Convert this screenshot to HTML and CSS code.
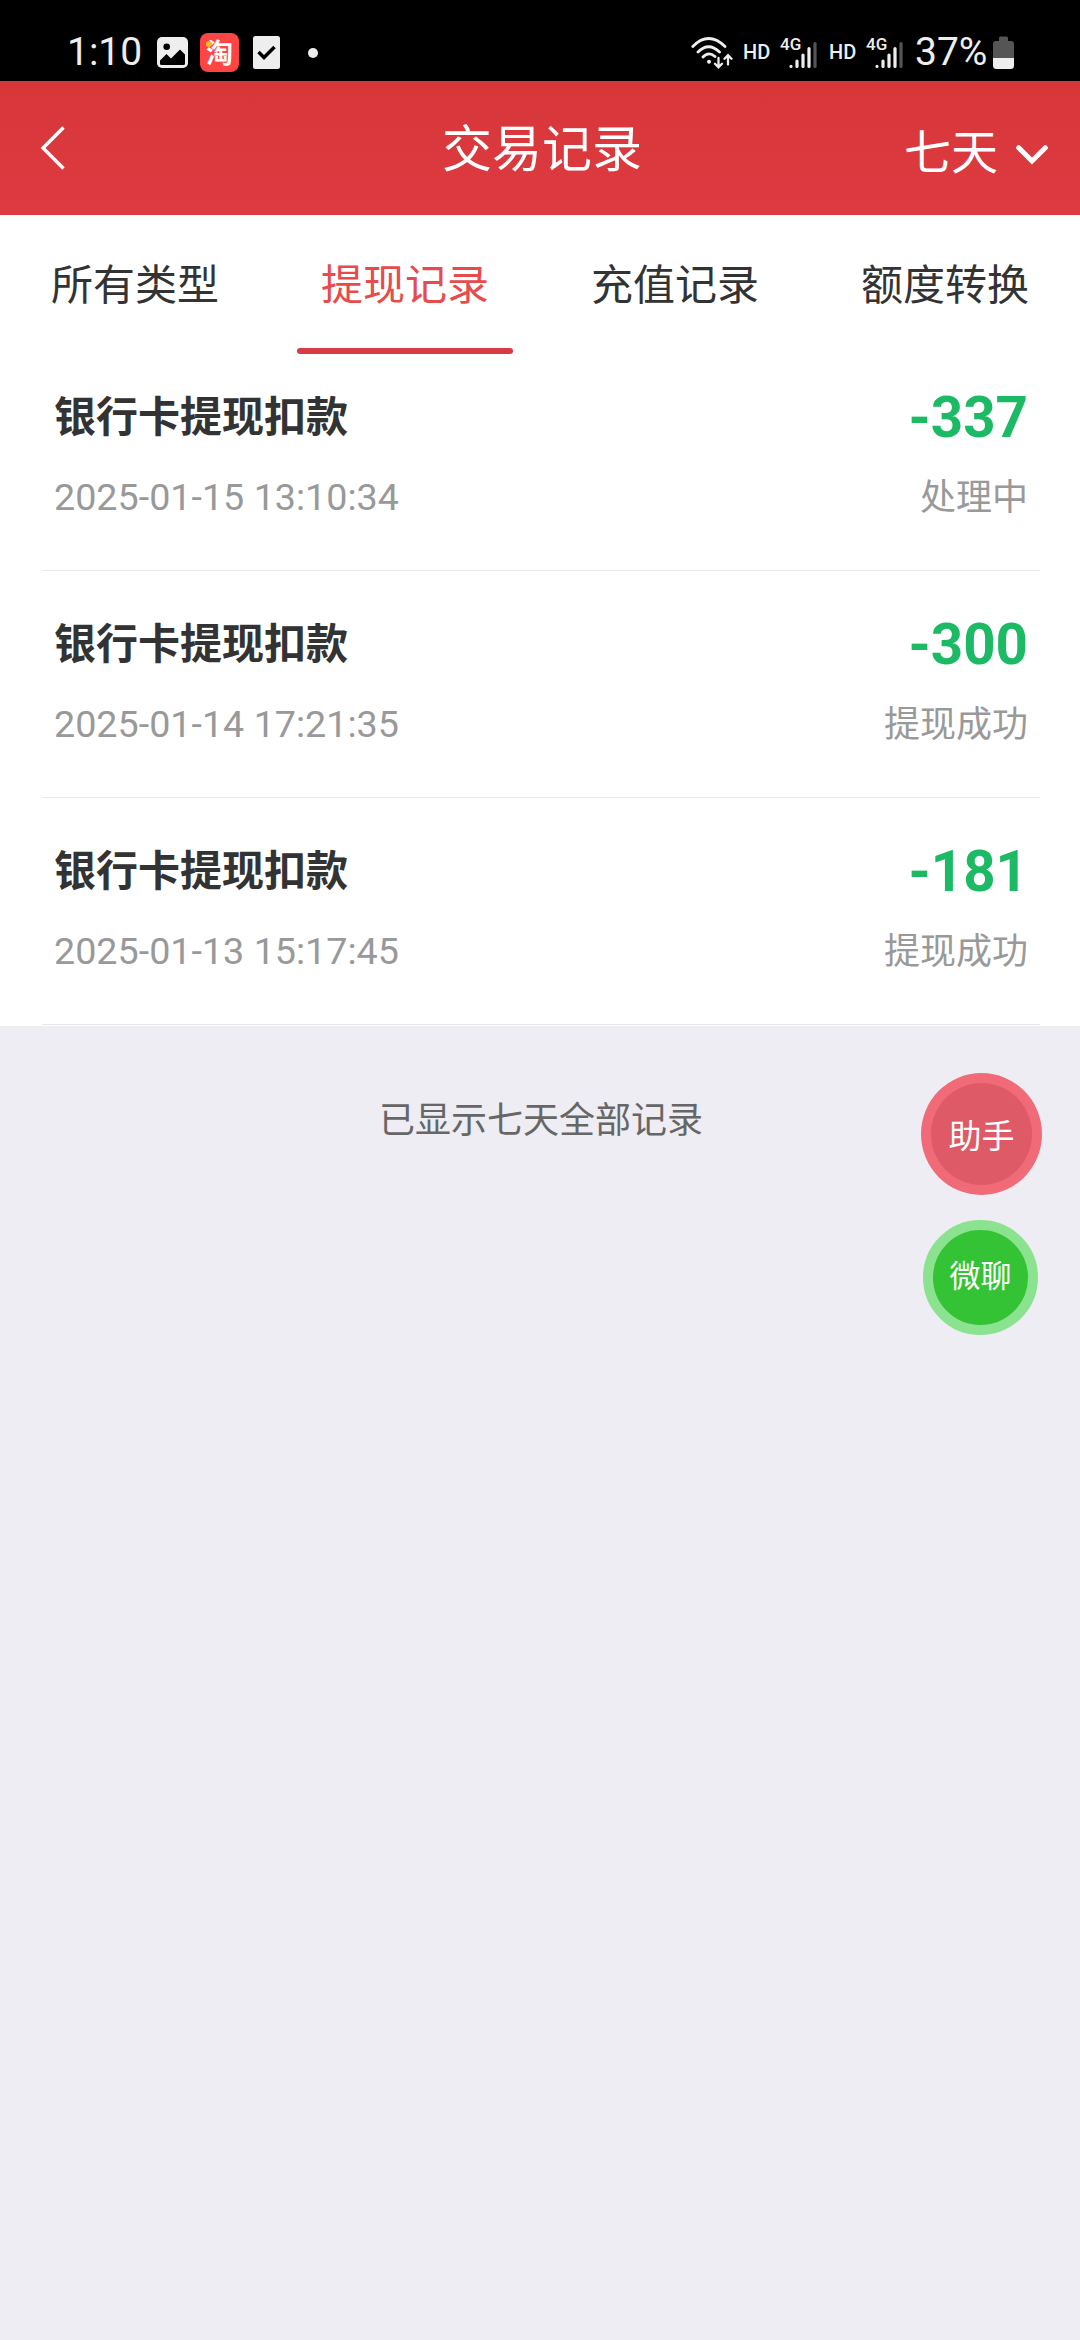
FILE: index.html
```html
<!DOCTYPE html>
<html lang="zh-CN">
<head>
<meta charset="utf-8">
<title>交易记录</title>
<link rel="stylesheet" href="styles.css">
</head>
<body>
<div class="status-bar">
  <div class="status-left">
    <span class="clock">1:10</span>
    <svg class="icon-photo" width="31" height="31" viewBox="0 0 31 31"><rect width="31" height="31" rx="5" fill="#eee"/><circle cx="9.7" cy="9.7" r="3.3" fill="#000"/><path d="M3 23.500L9.500 17L14 21.500L23 12.500L28 17.500V26.500Q28 28 26.500 28H4.500Q3 28 3 26.500Z" fill="#000"/></svg>
    <span class="icon-tao">淘</span>
    <svg class="icon-task" width="27" height="33" viewBox="0 0 27 33"><rect width="27" height="33" rx="2.500" fill="#eee"/><path d="M5.500 16L11 21.500L21.500 11" fill="none" stroke="#000" stroke-width="3.500"/></svg>
    <span class="dot"></span>
  </div>
  <div class="status-right">
    <svg class="icon-wifi" width="42" height="32" viewBox="0 0 42 32" fill="none" stroke="#eee" stroke-width="2.800" stroke-linecap="round"><path d="M1.800 9.500Q17.500 -6.300 34 9.500M7 15Q17.500 4.500 28.500 15M12 20Q17.500 14 24 19.500"/><circle cx="18" cy="24.700" r="2" fill="#eee" stroke="none"/><path d="M27.500 21V30M24 26.800L27.500 30.300L31 26.800M37 27.500V18.500M33.500 21.700L37 18.200L40.500 21.700" stroke-width="2.300"/></svg>
    <span class="hd">HD</span>
    <div class="signal"><span class="net">4G</span><svg class="bars" width="28" height="28" viewBox="0 0 28 28" stroke="#eee" stroke-width="3.200" stroke-linecap="round"><path d="M2 25.500V25.400M8 25.500V20M14 25.500V14M20 25.500V7.500"/><path d="M26 25.500V2.500" stroke="#555"/></svg></div>
    <span class="hd hd-second">HD</span>
    <div class="signal"><span class="net">4G</span><svg class="bars" width="28" height="28" viewBox="0 0 28 28" stroke="#eee" stroke-width="3.200" stroke-linecap="round"><path d="M2 25.500V25.400M8 25.500V20M14 25.500V14M20 25.500V7.500"/><path d="M26 25.500V2.500" stroke="#555"/></svg></div>
    <span class="percent">37%</span>
    <svg class="icon-battery" width="21" height="33" viewBox="0 0 21 33"><path d="M6 2Q6 .5 7.500 .5H13.500Q15 .5 15 2V5H18Q21 5 21 8V22H0V8Q0 5 3 5H6Z" fill="#555"/><path d="M0 22H21V29.500Q21 33 17.500 33H3.500Q0 33 0 29.500Z" fill="#eee"/></svg>
  </div>
</div>
<header class="header">
  <svg class="back" width="26" height="44" viewBox="0 0 26 44"><path d="M23.500 1.500L3 22L23.500 42.500" fill="none" stroke="#fff" stroke-width="3.400"/></svg>
  <h1 class="title">交易记录</h1>
  <div class="range"><span>七天</span><svg class="chevron" width="32" height="20" viewBox="0 0 32 20"><path d="M2.700 2.700L16 16L29.300 2.700" fill="none" stroke="#fff" stroke-width="5" stroke-linecap="round"/></svg></div>
</header>
<nav class="tabs">
  <div class="tab">所有类型</div>
  <div class="tab active">提现记录</div>
  <div class="tab">充值记录</div>
  <div class="tab">额度转换</div>
</nav>
<main class="records">
  <div class="record">
    <div class="info"><div class="name">银行卡提现扣款</div><div class="time">2025-01-15 13:10:34</div></div>
    <div class="result"><div class="amount">-337</div><div class="state">处理中</div></div>
  </div>
  <div class="record">
    <div class="info"><div class="name">银行卡提现扣款</div><div class="time">2025-01-14 17:21:35</div></div>
    <div class="result"><div class="amount">-300</div><div class="state">提现成功</div></div>
  </div>
  <div class="record">
    <div class="info"><div class="name">银行卡提现扣款</div><div class="time">2025-01-13 15:17:45</div></div>
    <div class="result"><div class="amount">-181</div><div class="state">提现成功</div></div>
  </div>
</main>
<p class="end-note">已显示七天全部记录</p>
<aside class="floating">
  <div class="bubble helper">助手</div>
  <div class="bubble chat">微聊</div>
</aside>
</body>
</html>
```
FILE: styles.css
```css
* { box-sizing: border-box; }
body {
  margin: 0;
  min-height: 2340px;
  background: #eeedf3;
  color: #333;
  font-family: "Noto Sans CJK SC", sans-serif;
}
svg { display: block; flex: none; }

.status-bar {
  height: 81px;
  padding: 24px 66px 0 67px;
  display: flex;
  justify-content: space-between;
  background: #000;
  color: #eee;
  font-family: Roboto, sans-serif;
}
.status-left, .status-right { display: flex; align-items: center; height: 57px; }
.clock { width: 90px; font-size: 39px; line-height: 57px; }
.icon-tao {
  position: relative;
  width: 39px;
  height: 39px;
  margin: 0 14px 0 12px;
  border-radius: 8px;
  background: #ff4444;
  color: #fff;
  font: bold 27px/38px "Noto Sans CJK SC", sans-serif;
  text-align: center;
}
.icon-tao::after {
  content: "";
  position: absolute;
  top: 8px;
  left: 6px;
  width: 6px;
  height: 6px;
  border-radius: 50%;
  background: #fdb52b;
}
.dot { width: 10px; height: 10px; margin-left: 28px; border-radius: 50%; background: #eee; }
.hd { width: 37px; margin-left: 10px; font-size: 20px; font-weight: 500; line-height: 57px; }
.hd-second { margin-left: 12px; }
.signal { display: grid; width: 37px; height: 33px; }
.net { grid-area: 1 / 1; font-size: 17px; font-weight: 500; line-height: 17px; }
.bars { grid-area: 1 / 1; margin: 5px 0 0 9px; }
.percent { width: 78px; margin-left: 12px; font-size: 39px; line-height: 57px; }

.header {
  height: 134px;
  padding: 0 32px 0 40px;
  display: grid;
  grid-template-columns: 1fr auto 1fr;
  align-items: center;
  background: linear-gradient(#d73639, #dd3b41);
  color: #fff;
}
.title { margin: 0; padding: 0 4px 6px 0; font-size: 50px; font-weight: 400; line-height: 128px; }
.range { display: flex; justify-content: flex-end; align-items: center; font-size: 47px; line-height: 126px; padding-top: 2px; }
.chevron { margin: 12px 0 0 18px; }

.tabs { display: flex; height: 139px; background: #fff; }
.tab {
  flex: 1;
  display: flex;
  flex-direction: column;
  align-items: center;
  justify-content: space-between;
  font-size: 42px;
  line-height: 133px;
}
.tab.active { color: #e84b4b; }
.tab.active::after { content: ""; width: 216px; height: 6px; border-radius: 3px; background: #d83b43; }

.records { height: 672px; padding: 0 40px 0 42px; background: #fff; }
.record {
  height: 227px;
  padding: 0 12px;
  display: flex;
  justify-content: space-between;
  border-bottom: 1px solid #e8e8e8;
}
.record:first-child { height: 217px; }
.record + .record { padding-top: 10px; }
.name { height: 108px; padding-top: 30px; font-size: 42px; font-weight: 700; line-height: 60px; }
.time { color: #999; font: 37.700px/71px Roboto, sans-serif; }
.result { text-align: right; }
.amount { height: 108px; padding-top: 30px; color: #1dba65; font: bold 56.500px/68px Roboto, sans-serif; }
.state { color: #999; font-size: 36px; line-height: 65px; }

.end-note { margin: 59px 0 0 2px; color: #666; font-size: 36px; line-height: 64px; text-align: center; }

.floating {
  position: absolute;
  top: 1073px;
  right: 38px;
  display: flex;
  flex-direction: column;
  align-items: flex-end;
  gap: 25px;
  color: #fff;
}
.bubble { border-radius: 50%; text-align: center; }
.helper { width: 121px; height: 122px; border: 10px solid #f06a78; background: #dd5a66; font-size: 33px; line-height: 103px; }
.chat { width: 115px; height: 115px; margin-right: 4px; border: 10px solid #8be28f; background: #34c334; font-size: 31px; line-height: 88px; }
```
